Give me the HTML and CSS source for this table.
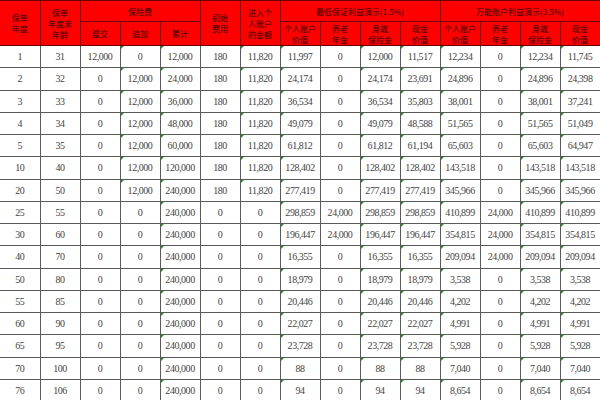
FILE: index.html
```html
<!DOCTYPE html>
<html lang="zh-CN">
<head>
<meta charset="utf-8">
<title>利益演示表</title>
<link rel="stylesheet" href="styles.css">
</head>
<body>
<table class="sheet">
  <colgroup>
    <col span="15" class="c">
  </colgroup>
  <thead>
    <tr class="h1">
      <th rowspan="2">保单<br>年度</th>
      <th rowspan="2">保单<br>年度末<br>年龄</th>
      <th colspan="3">保险费</th>
      <th rowspan="2">初始<br>费用</th>
      <th rowspan="2">进入个<br>人账户<br>的金额</th>
      <th colspan="4">最低保证利益演示(1.5%)</th>
      <th colspan="4">万能账户利益演示(3.5%)</th>
    </tr>
    <tr class="h2">
      <th>趸交</th>
      <th>追加</th>
      <th>累计</th>
      <th>个人账户<br>价值</th>
      <th>养老<br>年金</th>
      <th>身故<br>保险金</th>
      <th>现金<br>价值</th>
      <th>个人账户<br>价值</th>
      <th>养老<br>年金</th>
      <th>身故<br>保险金</th>
      <th>现金<br>价值</th>
    </tr>
  </thead>
  <tbody>
    <tr><td>1</td><td>31</td><td>12,000</td><td class="g">0</td><td class="g">12,000</td><td>180</td><td class="g">11,820</td><td class="g">11,997</td><td>0</td><td class="g">12,000</td><td class="g">11,517</td><td class="g">12,234</td><td>0</td><td class="g">12,234</td><td class="g">11,745</td></tr>
    <tr><td>2</td><td>32</td><td>0</td><td class="g">12,000</td><td class="g">24,000</td><td>180</td><td class="g">11,820</td><td class="g">24,174</td><td>0</td><td class="g">24,174</td><td class="g">23,691</td><td class="g">24,896</td><td>0</td><td class="g">24,896</td><td class="g">24,398</td></tr>
    <tr><td>3</td><td>33</td><td>0</td><td class="g">12,000</td><td class="g">36,000</td><td>180</td><td class="g">11,820</td><td class="g">36,534</td><td>0</td><td class="g">36,534</td><td class="g">35,803</td><td class="g">38,001</td><td>0</td><td class="g">38,001</td><td class="g">37,241</td></tr>
    <tr><td>4</td><td>34</td><td>0</td><td class="g">12,000</td><td class="g">48,000</td><td>180</td><td class="g">11,820</td><td class="g">49,079</td><td>0</td><td class="g">49,079</td><td class="g">48,588</td><td class="g">51,565</td><td>0</td><td class="g">51,565</td><td class="g">51,049</td></tr>
    <tr><td>5</td><td>35</td><td>0</td><td class="g">12,000</td><td class="g">60,000</td><td>180</td><td class="g">11,820</td><td class="g">61,812</td><td>0</td><td class="g">61,812</td><td class="g">61,194</td><td class="g">65,603</td><td>0</td><td class="g">65,603</td><td class="g">64,947</td></tr>
    <tr><td>10</td><td>40</td><td>0</td><td class="g">12,000</td><td class="g">120,000</td><td>180</td><td class="g">11,820</td><td class="g">128,402</td><td>0</td><td class="g">128,402</td><td class="g">128,402</td><td class="g">143,518</td><td>0</td><td class="g">143,518</td><td class="g">143,518</td></tr>
    <tr><td>20</td><td>50</td><td>0</td><td class="g">12,000</td><td class="g">240,000</td><td>180</td><td class="g">11,820</td><td class="g">277,419</td><td>0</td><td class="g">277,419</td><td class="g">277,419</td><td class="g">345,966</td><td>0</td><td class="g">345,966</td><td class="g">345,966</td></tr>
    <tr><td>25</td><td>55</td><td>0</td><td>0</td><td class="g">240,000</td><td>0</td><td>0</td><td class="g">298,859</td><td>24,000</td><td class="g">298,859</td><td class="g">298,859</td><td class="g">410,899</td><td>24,000</td><td class="g">410,899</td><td class="g">410,899</td></tr>
    <tr><td>30</td><td>60</td><td>0</td><td>0</td><td class="g">240,000</td><td>0</td><td>0</td><td class="g">196,447</td><td>24,000</td><td class="g">196,447</td><td class="g">196,447</td><td class="g">354,815</td><td>24,000</td><td class="g">354,815</td><td class="g">354,815</td></tr>
    <tr><td>40</td><td>70</td><td>0</td><td>0</td><td class="g">240,000</td><td>0</td><td>0</td><td class="g">16,355</td><td>0</td><td class="g">16,355</td><td class="g">16,355</td><td class="g">209,094</td><td>24,000</td><td class="g">209,094</td><td class="g">209,094</td></tr>
    <tr><td>50</td><td>80</td><td>0</td><td>0</td><td class="g">240,000</td><td>0</td><td>0</td><td class="g">18,979</td><td>0</td><td class="g">18,979</td><td class="g">18,979</td><td class="g">3,538</td><td>0</td><td class="g">3,538</td><td class="g">3,538</td></tr>
    <tr><td>55</td><td>85</td><td>0</td><td>0</td><td class="g">240,000</td><td>0</td><td>0</td><td class="g">20,446</td><td>0</td><td class="g">20,446</td><td class="g">20,446</td><td class="g">4,202</td><td>0</td><td class="g">4,202</td><td class="g">4,202</td></tr>
    <tr><td>60</td><td>90</td><td>0</td><td>0</td><td class="g">240,000</td><td>0</td><td>0</td><td class="g">22,027</td><td>0</td><td class="g">22,027</td><td class="g">22,027</td><td class="g">4,991</td><td>0</td><td class="g">4,991</td><td class="g">4,991</td></tr>
    <tr><td>65</td><td>95</td><td>0</td><td>0</td><td class="g">240,000</td><td>0</td><td>0</td><td class="g">23,728</td><td>0</td><td class="g">23,728</td><td class="g">23,728</td><td class="g">5,928</td><td>0</td><td class="g">5,928</td><td class="g">5,928</td></tr>
    <tr><td>70</td><td>100</td><td>0</td><td>0</td><td class="g">240,000</td><td>0</td><td>0</td><td class="g">88</td><td>0</td><td class="g">88</td><td class="g">88</td><td class="g">7,040</td><td>0</td><td class="g">7,040</td><td class="g">7,040</td></tr>
    <tr><td>76</td><td>106</td><td>0</td><td>0</td><td class="g">240,000</td><td>0</td><td>0</td><td class="g">94</td><td>0</td><td class="g">94</td><td class="g">94</td><td class="g">8,654</td><td>0</td><td class="g">8,654</td><td class="g">8,654</td></tr>
  </tbody>
</table>
</body>
</html>
```

FILE: styles.css
```css
html, body {
  margin: 0;
  padding: 0;
  background: #ffffff;
}

.sheet {
  width: 600px;
  table-layout: fixed;
  border-collapse: collapse;
  font-family: "Liberation Serif", "Noto Sans CJK SC", serif;
}

.c {
  width: 40px;
}

.sheet th {
  background: #ff0000;
  color: #300000;
  font-family: "Noto Sans CJK SC", sans-serif;
  font-weight: normal;
  font-size: 8px;
  line-height: 11px;
  border: 1px solid #6a0000;
  padding: 0;
  text-align: center;
  vertical-align: middle;
  overflow: hidden;
  white-space: nowrap;
}

.sheet th:first-child {
  border-left: none;
}

.h1 {
  height: 21px;
}

.h2 {
  height: 24px;
}

.sheet td {
  position: relative;
  height: 21.25px;
  padding: 0;
  border: 1px solid #5a5a5a;
  text-align: center;
  vertical-align: middle;
  font-size: 10px;
  letter-spacing: -0.45px;
  color: #444444;
  white-space: nowrap;
  overflow: hidden;
}

.sheet td:first-child {
  border-left: none;
}

.sheet td.g::before {
  content: "";
  position: absolute;
  top: 0;
  left: 0;
  border-top: 3px solid #2f8a2f;
  border-right: 3px solid transparent;
}
```
